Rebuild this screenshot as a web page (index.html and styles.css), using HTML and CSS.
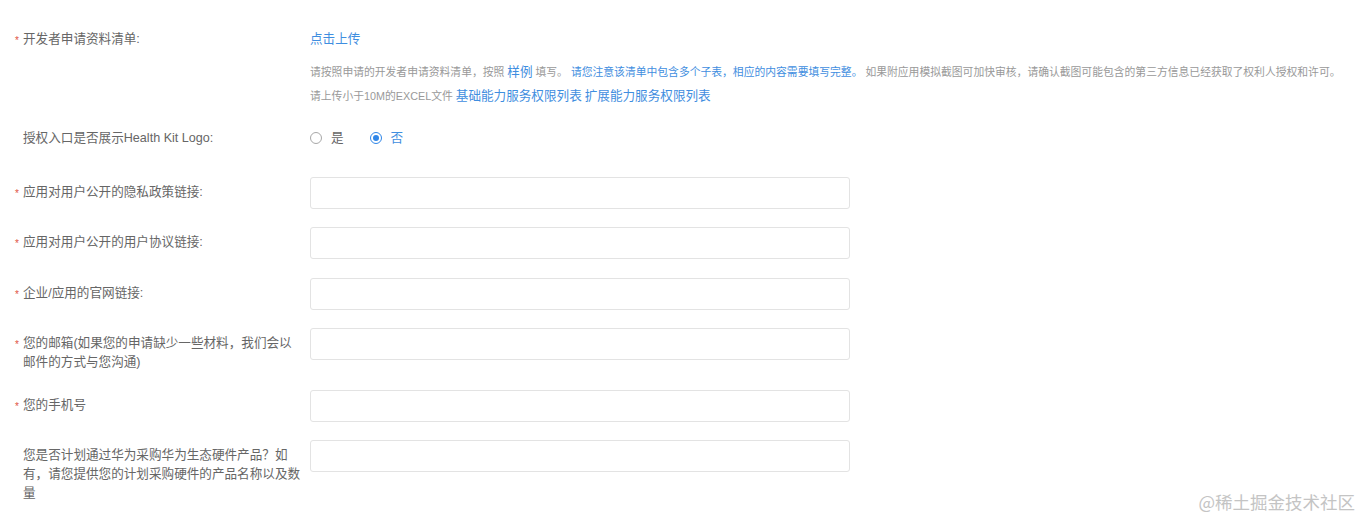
FILE: index.html
```html
<!DOCTYPE html>
<html lang="zh-CN">
<head>
<meta charset="utf-8">
<title>Form</title>
<link rel="stylesheet" href="styles.css">
</head>
<body>
<div class="form">
  <div class="row row-upload">
    <div class="label"><span class="req">*</span><span class="text">开发者申请资料清单:</span></div>
    <div class="control">
      <a class="link upload">点击上传</a>
      <p class="hint">请按照申请的开发者申请资料清单，按照 <a class="link big">样例</a> 填写。 <a class="link">请您注意该清单中包含多个子表，相应的内容需要填写完整。</a> 如果附应用模拟截图可加快审核，请确认截图可能包含的第三方信息已经获取了权利人授权和许可。</p>
      <p class="hint">请上传小于10M的EXCEL文件 <a class="link big">基础能力服务权限列表</a> <a class="link big">扩展能力服务权限列表</a></p>
    </div>
  </div>

  <div class="row row-radio">
    <div class="label"><span class="req"></span><span class="text">授权入口是否展示Health Kit Logo:</span></div>
    <div class="control radios">
      <label class="radio"><span class="dot"></span><span>是</span></label>
      <label class="radio checked"><span class="dot"></span><span>否</span></label>
    </div>
  </div>

  <div class="row row-input">
    <div class="label pad"><span class="req">*</span><span class="text">应用对用户公开的隐私政策链接:</span></div>
    <div class="input"></div>
  </div>
  <div class="row row-input">
    <div class="label pad"><span class="req">*</span><span class="text">应用对用户公开的用户协议链接:</span></div>
    <div class="input"></div>
  </div>
  <div class="row row-input">
    <div class="label pad"><span class="req">*</span><span class="text">企业/应用的官网链接:</span></div>
    <div class="input"></div>
  </div>
  <div class="row row-input">
    <div class="label pad"><span class="req">*</span><span class="text">您的邮箱(如果您的申请缺少一些材料，我们会以邮件的方式与您沟通)</span></div>
    <div class="input"></div>
  </div>
  <div class="row row-input">
    <div class="label pad"><span class="req">*</span><span class="text">您的手机号</span></div>
    <div class="input"></div>
  </div>
  <div class="row row-input">
    <div class="label pad"><span class="req"></span><span class="text">您是否计划通过华为采购华为生态硬件产品？如有，请您提供您的计划采购硬件的产品名称以及数量</span></div>
    <div class="input"></div>
  </div>
</div>
<div class="watermark">@稀土掘金技术社区</div>
</body>
</html>
```

FILE: styles.css
```css
html, body {
  margin: 0;
  padding: 0;
  background: #ffffff;
}

body {
  font-family: "Liberation Sans", "Noto Sans CJK SC", sans-serif;
  color: #666666;
  font-size: 12.6px;
  line-height: 19px;
  height: 520px;
  position: relative;
  overflow: hidden;
}

.form {
  padding-top: 29.5px;
  display: flex;
  flex-direction: column;
}

.row {
  display: flex;
  align-items: flex-start;
}

.label {
  width: 310px;
  box-sizing: border-box;
  padding-left: 15px;
  display: flex;
  flex-shrink: 0;
}

.label.pad {
  padding-top: 6px;
}

.req {
  width: 8px;
  flex-shrink: 0;
  color: #e0533f;
  font-size: 10px;
  line-height: 22px;
}

.text {
  width: 279.5px;
  color: #666666;
}

.control {
  display: flex;
  flex-direction: column;
}

.link {
  color: #3f8ee0;
  text-decoration: none;
}

.link.big {
  font-size: 12.6px;
}

.upload {
  font-size: 12.6px;
  line-height: 19px;
}

.hint {
  margin: 0;
  font-size: 10.8px;
  line-height: 24px;
  color: #999999;
  white-space: nowrap;
}

.upload + .hint {
  margin-top: 11px;
}

.row-radio {
  margin-top: 21px;
}

.radios {
  flex-direction: row;
  gap: 26px;
}

.radio {
  display: flex;
  align-items: center;
  gap: 9px;
  color: #666666;
}

.dot {
  width: 12px;
  height: 12px;
  box-sizing: border-box;
  border: 1px solid #a8a8a8;
  border-radius: 50%;
  background: #ffffff;
  display: flex;
  align-items: center;
  justify-content: center;
}

.radio.checked {
  color: #3f8ee0;
}

.radio.checked .dot {
  border-color: #2f86e8;
}

.radio.checked .dot::after {
  content: "";
  width: 6px;
  height: 6px;
  border-radius: 50%;
  background: #2f86e8;
}

.row-radio + .row-input {
  margin-top: 29.5px;
}

.row-input + .row-input {
  margin-top: 18.3px;
}

.input {
  width: 540px;
  height: 32px;
  box-sizing: border-box;
  border: 1px solid #e3e3e3;
  border-radius: 3px;
  background: #ffffff;
  flex-shrink: 0;
}

.watermark {
  position: absolute;
  right: 8px;
  bottom: 7px;
  font-family: "Noto Sans CJK SC", sans-serif;
  font-size: 17.5px;
  line-height: 22px;
  color: #c4c4c4;
}
```
